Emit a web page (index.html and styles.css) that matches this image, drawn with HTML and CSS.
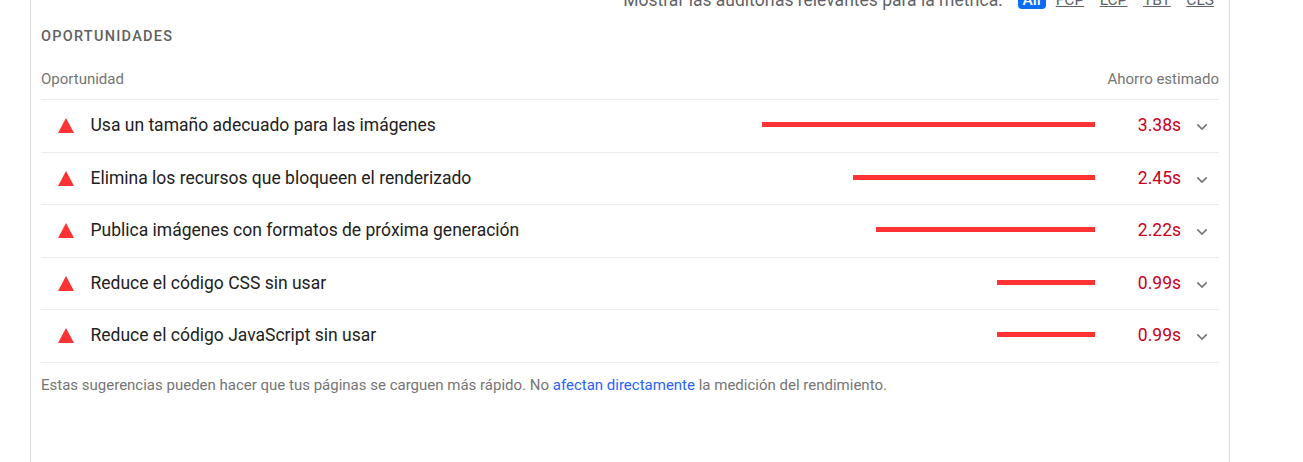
FILE: index.html
```html
<!DOCTYPE html>
<html lang="es">
<head>
    <title>Oportunidades</title>
    <link rel="stylesheet" href="styles.css">
</head>
<body>
    <div class="card">
        <!-- Metric filter, cut off by the top of the window -->
        <div class="filter">
            <span class="filter-label">Mostrar las auditorías relevantes para la métrica:</span>
            <span class="chip chip-active">All</span>
            <span class="chip">FCP</span>
            <span class="chip">LCP</span>
            <span class="chip">TBT</span>
            <span class="chip">CLS</span>
        </div>

        <h2 class="section-title">OPORTUNIDADES</h2>

        <div class="table-head">
            <span>Oportunidad</span>
            <span>Ahorro estimado</span>
        </div>

        <div class="audit">
            <svg class="warn" viewBox="0 0 16 15"><polygon points="8,0 16,15 0,15"/></svg>
            <span class="audit-title">Usa un tamaño adecuado para las imágenes</span>
            <div class="bar-track"><div class="bar" style="width: 333px"></div></div>
            <span class="saving">3.38s</span>
            <svg class="chevron" viewBox="0 0 14 9"><polyline points="1.5,1.5 7,7 12.5,1.5"/></svg>
        </div>
        <div class="audit">
            <svg class="warn" viewBox="0 0 16 15"><polygon points="8,0 16,15 0,15"/></svg>
            <span class="audit-title">Elimina los recursos que bloqueen el renderizado</span>
            <div class="bar-track"><div class="bar" style="width: 242px"></div></div>
            <span class="saving">2.45s</span>
            <svg class="chevron" viewBox="0 0 14 9"><polyline points="1.5,1.5 7,7 12.5,1.5"/></svg>
        </div>
        <div class="audit">
            <svg class="warn" viewBox="0 0 16 15"><polygon points="8,0 16,15 0,15"/></svg>
            <span class="audit-title">Publica imágenes con formatos de próxima generación</span>
            <div class="bar-track"><div class="bar" style="width: 219px"></div></div>
            <span class="saving">2.22s</span>
            <svg class="chevron" viewBox="0 0 14 9"><polyline points="1.5,1.5 7,7 12.5,1.5"/></svg>
        </div>
        <div class="audit">
            <svg class="warn" viewBox="0 0 16 15"><polygon points="8,0 16,15 0,15"/></svg>
            <span class="audit-title">Reduce el código CSS sin usar</span>
            <div class="bar-track"><div class="bar" style="width: 98px"></div></div>
            <span class="saving">0.99s</span>
            <svg class="chevron" viewBox="0 0 14 9"><polyline points="1.5,1.5 7,7 12.5,1.5"/></svg>
        </div>
        <div class="audit">
            <svg class="warn" viewBox="0 0 16 15"><polygon points="8,0 16,15 0,15"/></svg>
            <span class="audit-title">Reduce el código JavaScript sin usar</span>
            <div class="bar-track"><div class="bar" style="width: 98px"></div></div>
            <span class="saving">0.99s</span>
            <svg class="chevron" viewBox="0 0 14 9"><polyline points="1.5,1.5 7,7 12.5,1.5"/></svg>
        </div>

        <p class="note">Estas sugerencias pueden hacer que tus páginas se carguen más rápido. No <a href="#">afectan directamente</a> la medición del rendimiento.</p>
    </div>
</body>
</html>
```

FILE: styles.css
```css
html, body {
    height: 100%;
}

body {
    font-family: Roboto, Arial, sans-serif;
    background-color: #fff;
    margin: 0;
    padding: 0 73px 0 30px;
    overflow: hidden;
}

.card {
    margin-top: -12px;
    height: 474px;
    box-sizing: border-box;
    padding: 0 10px;
    border-left: 1px solid #dadce0;
    border-right: 1px solid #dadce0;
}

.filter {
    display: flex;
    justify-content: flex-end;
    align-items: center;
    height: 24px;
    padding-right: 5px;
    font-size: 17.5px;
    color: #5f6368;
}

.filter-label {
    margin-right: 15px;
}

.chip {
    margin-left: 15.5px;
    font-size: 15.5px;
    text-decoration: underline;
}

.chip-active {
    margin-left: 0;
    padding: 0 5px;
    color: #fff;
    background-color: #0b6cf5;
    border-radius: 4px;
    text-decoration: none;
    font-weight: 500;
}

.chip-active + .chip {
    margin-left: 10px;
}

.section-title {
    margin: 15px 0 0;
    font-size: 14.5px;
    line-height: 20px;
    font-weight: 500;
    letter-spacing: 1.25px;
    color: #616161;
}

.table-head {
    display: flex;
    justify-content: space-between;
    margin-top: 22px;
    padding-bottom: 10px;
    font-size: 15px;
    line-height: 20px;
    color: #757575;
    border-bottom: 1px solid #ebebeb;
}

.audit {
    display: flex;
    align-items: center;
    box-sizing: border-box;
    height: 52.5px;
    padding-bottom: 1.5px;
    border-bottom: 1px solid #ebebeb;
}

.warn {
    width: 16px;
    height: 15px;
    margin: 1px 17px 0 16.5px;
    fill: #ff3333;
}

.audit-title {
    font-size: 17.5px;
    color: #212121;
}

.bar-track {
    flex: 1;
    display: flex;
    justify-content: flex-end;
}

.bar {
    height: 5px;
    margin-bottom: 0.5px;
    background-color: #ff3333;
}

.saving {
    width: 86px;
    text-align: right;
    font-size: 17.5px;
    color: #c7001e;
}

.chevron {
    width: 12px;
    height: 8px;
    margin: 4px 11px 0 15px;
    fill: none;
    stroke: #757575;
    stroke-width: 1.9;
}

.note {
    margin: 12px 0 0;
    font-size: 15px;
    line-height: 20px;
    color: #757575;
}

.note a {
    color: #2962ff;
    text-decoration: none;
}
```
